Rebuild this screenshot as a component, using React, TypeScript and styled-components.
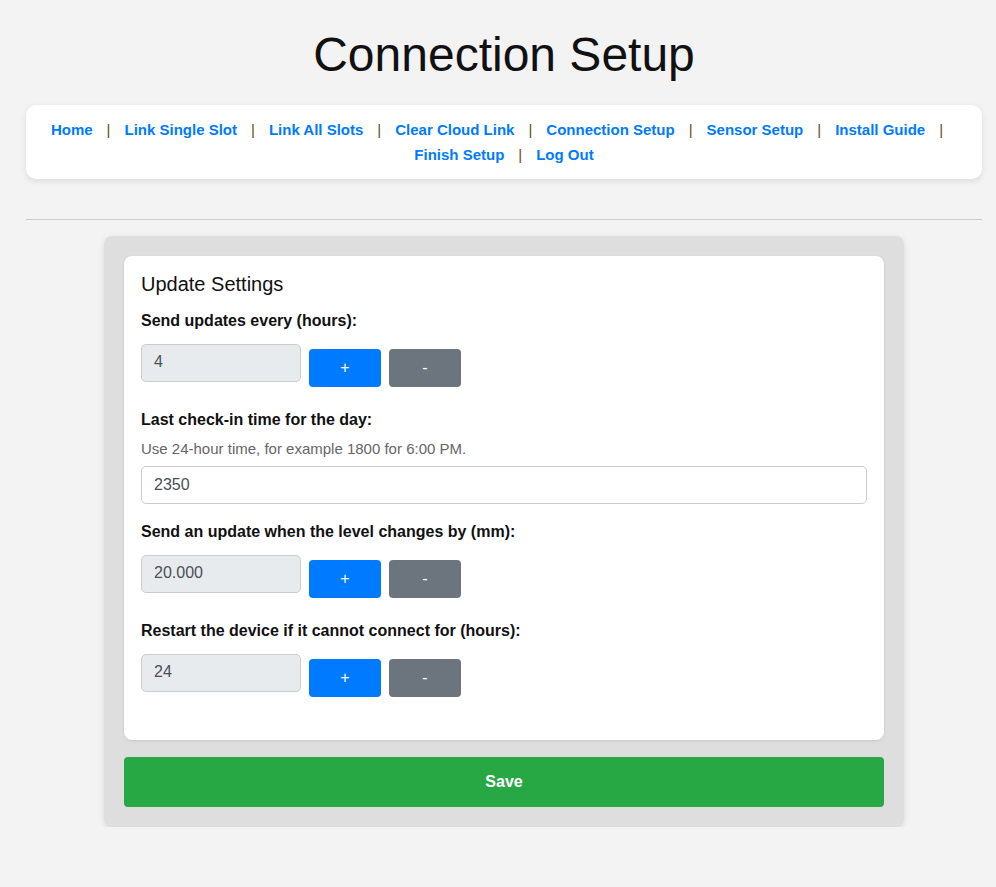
import React from "react";
import styled, { createGlobalStyle } from "styled-components";

const Global = createGlobalStyle`
  body { margin: 0; background: #f3f3f3; font-family: "Liberation Sans", Arial, sans-serif; color: #111; }
`;
const Page = styled.div`padding: 0 14px 0 26px; display: flex; flex-direction: column;`;
const Title = styled.h1`font-size: 48px; font-weight: 400; text-align: center; margin: 27px 0 22px; line-height: 56px;`;
const Nav = styled.nav`
  background: #fff; border-radius: 10px; box-shadow: 0 2px 6px rgba(0,0,0,0.1);
  padding: 12px 20px; text-align: center; line-height: 25px; font-size: 15px; font-weight: 700;
`;
const Link = styled.a`color: #007bff; text-decoration: none;`;
const Sep = styled.span`color: #6a4a20; margin: 0 14px; font-weight: 400;`;
const Rule = styled.hr`border: 0; border-top: 1px solid #ccc; margin: 40px 0 16px; width: 100%;`;
const Outer = styled.div`
  width: 760px; margin: 0 auto; background: #dedede; border-radius: 8px; padding: 20px;
  box-shadow: 0 2px 6px rgba(0,0,0,0.1); display: flex; flex-direction: column; gap: 17px;
`;
const Card = styled.div`background: #fff; border-radius: 8px; padding: 14px 17px 20px; box-shadow: 0 1px 3px rgba(0,0,0,0.1);`;
const CardTitle = styled.h2`font-size: 20px; font-weight: 400; margin: 0 0 13px; line-height: 28px;`;
const Label = styled.div`font-weight: 700; font-size: 16px; margin: 0 0 13px; line-height: 20px;`;
const Help = styled.div`font-size: 15px; color: #666; margin: -4px 0 7px; line-height: 20px;`;
const Row = styled.div`display: flex; gap: 8px; align-items: flex-start; margin-bottom: 23px;`;
const Input = styled.div<{ $full?: boolean; $ro?: boolean }>`
  box-sizing: border-box; height: 38px; width: ${p => p.$full ? "100%" : "160px"};
  border: 1px solid #ccc; border-radius: 5px; background: ${p => p.$ro ? "#e8ebee" : "#fff"};
  color: #495057; font-size: 16px; padding: 0 12px; display: flex; align-items: center;
  ${p => p.$ro ? "padding-top: 0; padding-bottom: 2px;" : ""}
`;
const Btn = styled.button<{ $minus?: boolean }>`
  width: 72px; height: 38px; margin-top: 5px; border: 0; border-radius: 4px; color: #fff;
  background: ${p => p.$minus ? "#6c757d" : "#007bff"}; font-size: 16px; font-family: inherit;
`;
const Save = styled.button`
  height: 50px; border: 0; border-radius: 4px; background: #28a745; color: #fff;
  font-weight: 700; font-size: 16px; font-family: inherit;
`;

const links = ["Home","Link Single Slot","Link All Slots","Clear Cloud Link","Connection Setup","Sensor Setup","Install Guide","Finish Setup","Log Out"];

const Stepper = ({ v }: { v: string }) => (
  <Row><Input $ro>{v}</Input><Btn>+</Btn><Btn $minus>-</Btn></Row>
);

export default function App() {
  return (
    <Page>
      <Global />
      <Title>Connection Setup</Title>
      <Nav>
        {links.map((l, i) => (
          <React.Fragment key={l}>
            <Link href="#">{l}</Link>
            {i < links.length - 1 && <Sep>|</Sep>}
            {i === 6 && " "}
          </React.Fragment>
        ))}
      </Nav>
      <Rule />
      <Outer>
        <Card>
          <CardTitle>Update Settings</CardTitle>
          <Label>Send updates every (hours):</Label>
          <Stepper v="4" />
          <Label>Last check-in time for the day:</Label>
          <Help>Use 24-hour time, for example 1800 for 6:00 PM.</Help>
          <Row style={{ marginBottom: 18 }}><Input $full>2350</Input></Row>
          <Label>Send an update when the level changes by (mm):</Label>
          <Stepper v="20.000" />
          <Label>Restart the device if it cannot connect for (hours):</Label>
          <Stepper v="24" />
        </Card>
        <Save>Save</Save>
      </Outer>
    </Page>
  );
}
